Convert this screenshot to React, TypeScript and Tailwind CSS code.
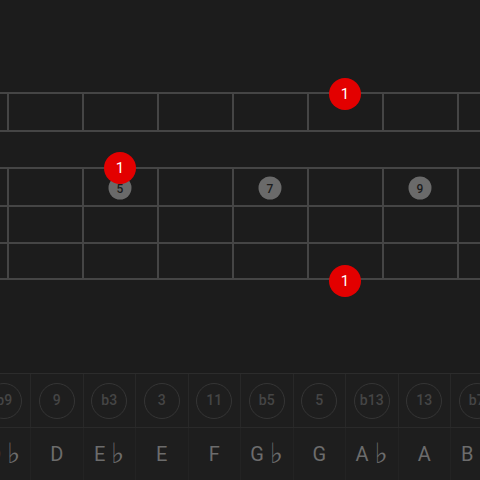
import React from 'react';

const FRETS = 8;
const intervals = ['b9', '9', 'b3', '3', '11', 'b5', '5', 'b13', '13', 'b7'];
const notes = ['D♭', 'D', 'E♭', 'E', 'F', 'G♭', 'G', 'A♭', 'A', 'B♭'];

const StringRow: React.FC<{ frets: boolean; last?: boolean }> = ({ frets, last }) => (
  <div className={`h-[37.6px] border-t-2 border-[#454545] flex ${last ? 'border-b-2' : ''}`}>
    {frets &&
      Array.from({ length: FRETS }).map((_, i) => (
        <div key={i} className="w-[75px] shrink-0 border-l-2 border-[#454545]" />
      ))}
  </div>
);

const Dot: React.FC<{ x: number; y: number; label: string; root?: boolean }> = ({ x, y, label, root }) => (
  <div
    className={`absolute flex items-center justify-center rounded-full -translate-x-1/2 -translate-y-1/2 ${
      root
        ? 'w-[32px] h-[32px] bg-[#e30000] text-white text-[15px] z-10'
        : 'w-[23px] h-[23px] bg-[#6a6a6a] text-[#1c1c1c] text-[12px] font-medium'
    }`}
    style={{ left: x, top: y }}
  >
    {label}
  </div>
);

export default function App() {
  return (
    <div className="w-[480px] h-[480px] bg-[#1c1c1c] overflow-hidden flex flex-col" style={{ fontFamily: 'Roboto, "Noto Sans", sans-serif' }}>
      {/* Fretboard */}
      <div className="relative h-[373px] shrink-0">
        <div className="pt-[92px] -ml-[68px] w-[700px]">
          <StringRow frets />
          <StringRow frets={false} />
          <StringRow frets />
          <StringRow frets />
          <StringRow frets last />
        </div>
        <Dot x={120} y={188} label="5" />
        <Dot x={270} y={188} label="7" />
        <Dot x={420} y={188} label="9" />
        <Dot x={345} y={94} label="1" root />
        <Dot x={120} y={168} label="1" root />
        <Dot x={345} y={281} label="1" root />
        <Dot x={497} y={206} label="1" root />
      </div>

      {/* Interval / note picker */}
      <div className="flex-1 border-t border-[#2c2c2c] bg-[#1e1e1e] flex flex-col">
        <div className="flex h-[54px] -ml-[21.5px] border-b border-[#2a2a2a]">
          {intervals.map((iv) => (
            <div key={iv} className="w-[52.5px] shrink-0 border-r border-[#282828] flex items-center justify-center">
              <div className="w-[36px] h-[36px] rounded-full border border-[#353535] flex items-center justify-center text-[14px] font-medium text-[#454545]">
                {iv}
              </div>
            </div>
          ))}
        </div>
        <div className="flex flex-1 -ml-[21.5px]">
          {notes.map((n) => (
            <div key={n} className="w-[52.5px] shrink-0 border-r border-[#232323] flex items-center justify-center text-[20px] text-[#6c6c6c] whitespace-nowrap">
              {n.length > 1 ? (
                <span className="flex items-center">
                  {n[0]}
                  <span className="ml-[6px] text-[28px] leading-none" style={{ fontFamily: '"DejaVu Sans", sans-serif' }}>
                    {n[1]}
                  </span>
                </span>
              ) : (
                n
              )}
            </div>
          ))}
        </div>
      </div>
    </div>
  );
}
